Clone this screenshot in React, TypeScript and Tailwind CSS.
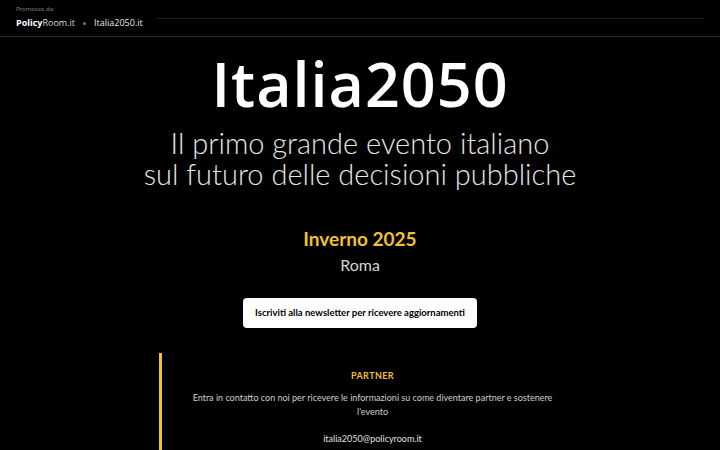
import React from 'react';

const raleway = { fontFamily: '"Open Sans", "Noto Sans", sans-serif' };

function TopBar() {
  return (
    <header className="h-[37px] border-b border-[#2a2a2a] px-4 flex items-center gap-[14px]">
      <div className="flex flex-col shrink-0" style={raleway}>
        <span className="text-[6px] leading-[8px] text-[#8a8a8a] mt-[-2px]">Promosso da:</span>
        <div className="flex items-center text-[9px] leading-[12px] text-white mt-[4px]">
          <span className="font-bold">Policy</span>
          <span className="font-normal text-[#dcdcdc]">Room.it</span>
          <span className="mx-[8px] w-[3px] h-[3px] rounded-full bg-[#777]" />
          <span className="text-[#e8e8e8]">Italia2050.it</span>
        </div>
      </div>
      <div className="flex-1 h-px bg-[#1d1d33] mr-[1px]" />
    </header>
  );
}

export default function App() {
  return (
    <div className="w-[720px] h-[450px] overflow-hidden bg-black text-white" style={{ fontFamily: 'Lato, "Open Sans", sans-serif' }}>
      <TopBar />
      <main className="flex flex-col items-center">
        <h1 className="mt-[9px] text-[61px] leading-[76px] font-semibold tracking-[1px] text-white" style={raleway}>
          Italia2050
        </h1>
        <p className="mt-[5px] text-[29px] leading-[31px] font-light text-center text-[#e6e6e6]">
          Il primo grande evento italiano
          <br />
          sul futuro delle decisioni pubbliche
        </p>
        <h2 className="mt-[38px] text-[19px] leading-[24px] font-bold text-[#f2c230]">Inverno 2025</h2>
        <p className="mt-[4px] text-[16px] leading-[20px] text-[#d4d4d4]">Roma</p>
        <button className="mt-[23px] w-[234px] h-[30px] rounded-[4px] bg-white text-black text-[9.5px] font-bold">
          Iscriviti alla newsletter per ricevere aggiornamenti
        </button>
        <section className="mt-[25px] ml-[22px] w-[424px] h-[120px] border-l-[3px] border-[#f2c230] flex flex-col items-center">
          <h3 className="mt-[17px] text-[9px] leading-[12px] font-bold tracking-[0.4px] text-[#f2c230]">PARTNER</h3>
          <p className="mt-[9px] max-w-[370px] text-[9px] leading-[14px] text-center text-[#cfcfcf]">
            Entra in contatto con noi per ricevere le informazioni su come diventare partner e sostenere l'evento
          </p>
          <p className="mt-[14px] text-[9px] leading-[12px] text-[#e0e0e0]">italia2050@policyroom.it</p>
        </section>
      </main>
    </div>
  );
}
